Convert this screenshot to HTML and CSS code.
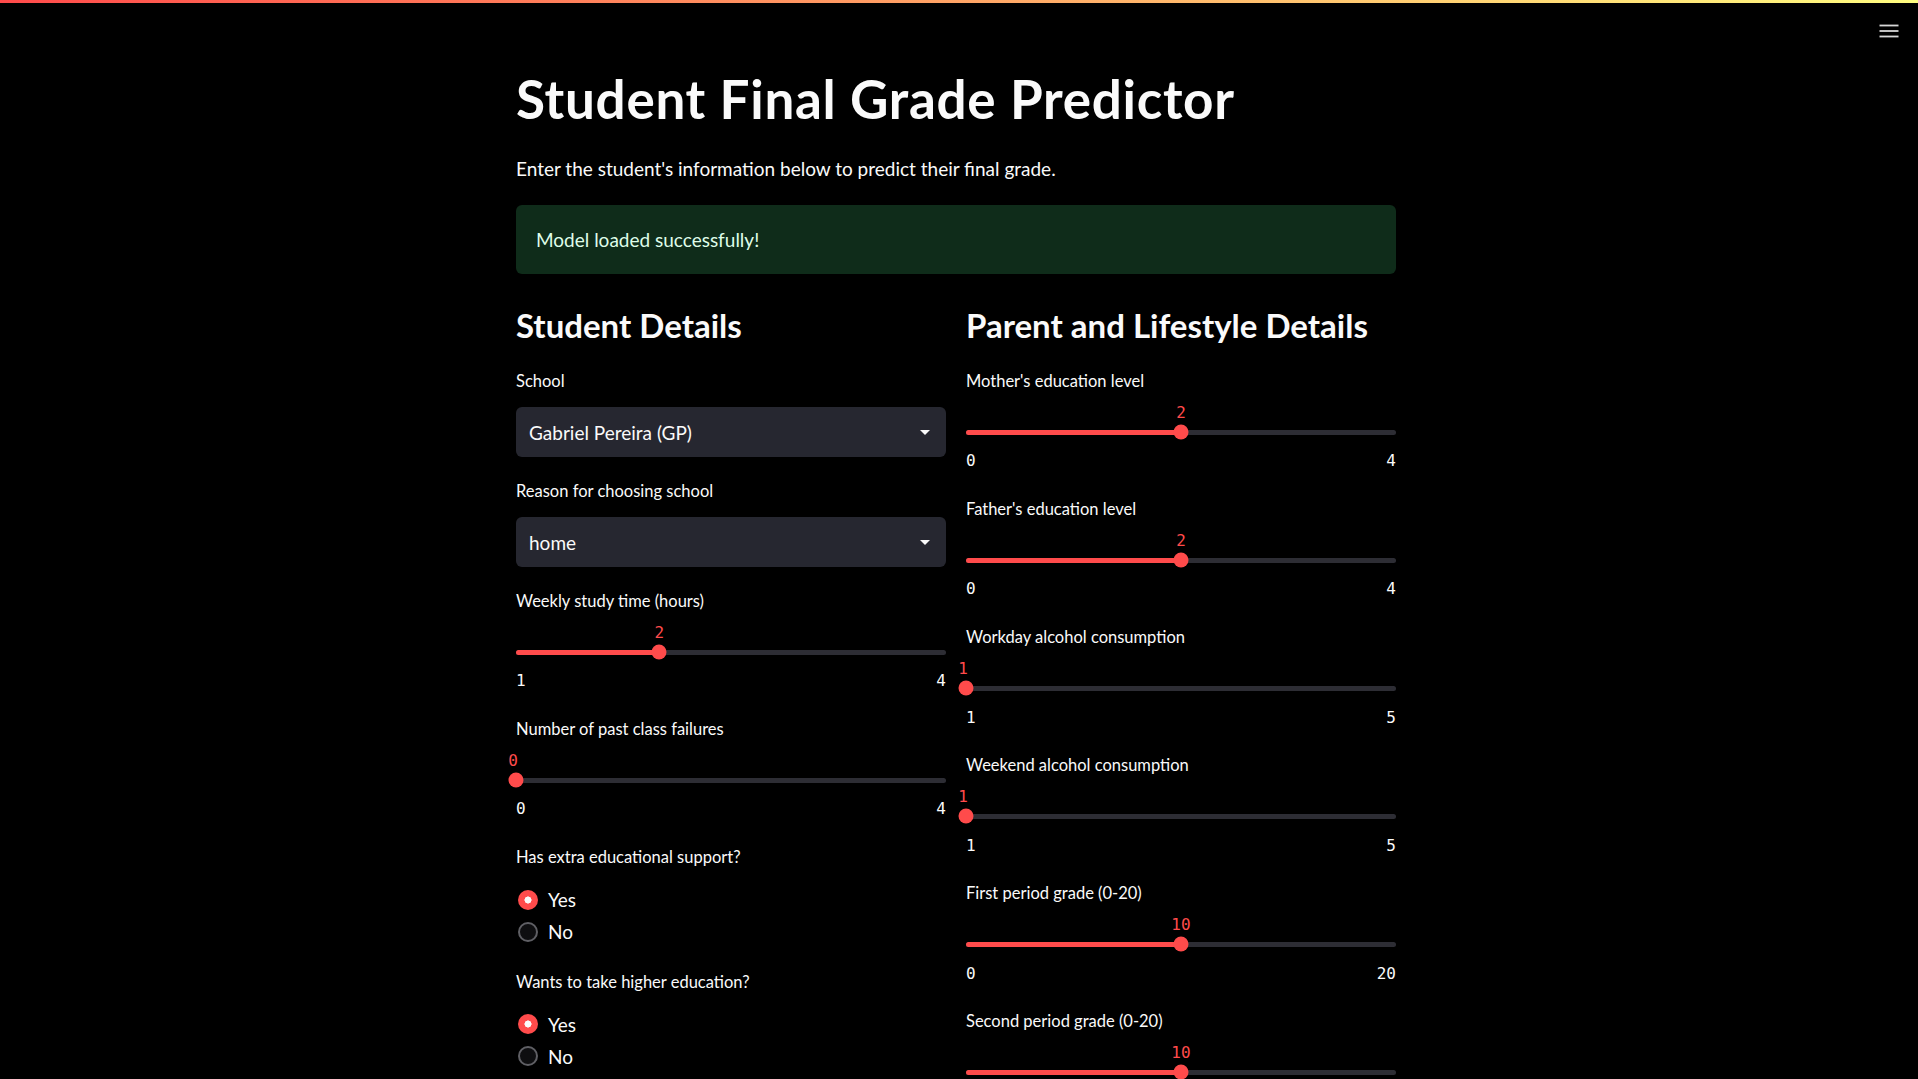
FILE: index.html
```html
<!DOCTYPE html>
<html lang="en">
<head>
<meta charset="utf-8">
<title>Student Final Grade Predictor</title>
<link rel="stylesheet" href="styles.css">
</head>
<body>
<header class="app-header">
  <div class="decoration"></div>
  <button class="menu-btn" aria-label="Main menu">
    <svg width="20" height="14" viewBox="0 0 20 14"><rect x="0.5" y="0.6" width="19" height="1.8" fill="#d6d6d6"/><rect x="0.5" y="6.1" width="19" height="1.8" fill="#d6d6d6"/><rect x="0.5" y="11.6" width="19" height="1.8" fill="#d6d6d6"/></svg>
  </button>
</header>
<main class="block">
  <h1 class="title">Student Final Grade Predictor</h1>
  <p class="intro">Enter the student's information below to predict their final grade.</p>
  <div class="alert">Model loaded successfully!</div>

  <div class="columns">
    <section class="col">
      <h3 class="subheader">Student Details</h3>
      <div class="widgets">
        <div class="widget">
          <label class="wlabel">School</label>
          <div class="select"><span>Gabriel Pereira (GP)</span><svg class="caret" width="10" height="5" viewBox="0 0 10 5"><polygon points="0,0 10,0 5,5" fill="#fafafa"/></svg></div>
        </div>
        <div class="widget">
          <label class="wlabel">Reason for choosing school</label>
          <div class="select"><span>home</span><svg class="caret" width="10" height="5" viewBox="0 0 10 5"><polygon points="0,0 10,0 5,5" fill="#fafafa"/></svg></div>
        </div>
        <div class="widget">
          <label class="wlabel">Weekly study time (hours)</label>
          <div class="slider">
            <div class="track-wrap">
              <div class="track"><div class="fill" style="width:33.333%"></div></div>
              <div class="thumb" style="left:33.333%"><span class="thumb-value">2</span></div>
            </div>
            <div class="ticks"><span>1</span><span>4</span></div>
          </div>
        </div>
        <div class="widget">
          <label class="wlabel">Number of past class failures</label>
          <div class="slider">
            <div class="track-wrap">
              <div class="track"><div class="fill" style="width:0%"></div></div>
              <div class="thumb" style="left:0%"><span class="thumb-value at-min">0</span></div>
            </div>
            <div class="ticks"><span>0</span><span>4</span></div>
          </div>
        </div>
        <div class="widget">
          <label class="wlabel">Has extra educational support?</label>
          <div class="radio-group">
            <div class="radio"><span class="dot checked"></span><span>Yes</span></div>
            <div class="radio"><span class="dot"></span><span>No</span></div>
          </div>
        </div>
        <div class="widget">
          <label class="wlabel">Wants to take higher education?</label>
          <div class="radio-group">
            <div class="radio"><span class="dot checked"></span><span>Yes</span></div>
            <div class="radio"><span class="dot"></span><span>No</span></div>
          </div>
        </div>
      </div>
    </section>

    <section class="col">
      <h3 class="subheader">Parent and Lifestyle Details</h3>
      <div class="widgets">
        <div class="widget">
          <label class="wlabel">Mother's education level</label>
          <div class="slider">
            <div class="track-wrap">
              <div class="track"><div class="fill" style="width:50%"></div></div>
              <div class="thumb" style="left:50%"><span class="thumb-value">2</span></div>
            </div>
            <div class="ticks"><span>0</span><span>4</span></div>
          </div>
        </div>
        <div class="widget">
          <label class="wlabel">Father's education level</label>
          <div class="slider">
            <div class="track-wrap">
              <div class="track"><div class="fill" style="width:50%"></div></div>
              <div class="thumb" style="left:50%"><span class="thumb-value">2</span></div>
            </div>
            <div class="ticks"><span>0</span><span>4</span></div>
          </div>
        </div>
        <div class="widget">
          <label class="wlabel">Workday alcohol consumption</label>
          <div class="slider">
            <div class="track-wrap">
              <div class="track"><div class="fill" style="width:0%"></div></div>
              <div class="thumb" style="left:0%"><span class="thumb-value at-min">1</span></div>
            </div>
            <div class="ticks"><span>1</span><span>5</span></div>
          </div>
        </div>
        <div class="widget">
          <label class="wlabel">Weekend alcohol consumption</label>
          <div class="slider">
            <div class="track-wrap">
              <div class="track"><div class="fill" style="width:0%"></div></div>
              <div class="thumb" style="left:0%"><span class="thumb-value at-min">1</span></div>
            </div>
            <div class="ticks"><span>1</span><span>5</span></div>
          </div>
        </div>
        <div class="widget">
          <label class="wlabel">First period grade (0-20)</label>
          <div class="slider">
            <div class="track-wrap">
              <div class="track"><div class="fill" style="width:50%"></div></div>
              <div class="thumb" style="left:50%"><span class="thumb-value">10</span></div>
            </div>
            <div class="ticks"><span>0</span><span>20</span></div>
          </div>
        </div>
        <div class="widget">
          <label class="wlabel">Second period grade (0-20)</label>
          <div class="slider">
            <div class="track-wrap">
              <div class="track"><div class="fill" style="width:50%"></div></div>
              <div class="thumb" style="left:50%"><span class="thumb-value">10</span></div>
            </div>
            <div class="ticks"><span>0</span><span>20</span></div>
          </div>
        </div>
      </div>
    </section>
  </div>
</main>
</body>
</html>
```

FILE: styles.css
```css
html, body {
  margin: 0;
  background: #000;
  color: #fafafa;
  font-family: Lato, "Noto Sans", sans-serif;
}
body {
  padding-right: 6px;
  overflow: hidden;
  height: 1079px;
}
.app-header {
  position: fixed;
  top: 0;
  left: 0;
  right: 0;
  height: 58px;
}
.decoration {
  height: 3px;
  background: linear-gradient(90deg, #ff4b4b, #fffd80);
}
.menu-btn {
  position: absolute;
  top: 24px;
  right: 19px;
  width: 20px;
  height: 14px;
  padding: 0;
  border: 0;
  background: none;
  display: block;
}
.menu-btn svg { display: block; }

.block {
  width: 880px;
  margin: 0 auto;
  padding-top: 69px;
}
.title {
  margin: 0;
  font-size: 53px;
  line-height: 60px;
  letter-spacing: 0.7px;
  font-weight: 700;
}
.intro {
  margin: 24px 0 0;
  font-size: 19px;
  line-height: 32px;
}
.alert {
  margin-top: 20px;
  padding: 20px;
  font-size: 19px;
  line-height: 29px;
  background: #0f2c1a;
  color: #dffde9;
  border-radius: 6px;
}
.columns {
  display: grid;
  grid-template-columns: 1fr 1fr;
  column-gap: 20px;
  margin-top: 31px;
}
.subheader {
  margin: 0;
  font-size: 33px;
  line-height: 40px;
  font-weight: 700;
}
.widgets {
  display: flex;
  flex-direction: column;
  gap: 20px;
  margin-top: 22px;
}
.widget {
  display: flex;
  flex-direction: column;
}
.wlabel {
  font-size: 16.5px;
  line-height: 28px;
  height: 28px;
}
.select {
  margin-top: 12px;
  height: 50px;
  background: #262730;
  border-radius: 6px;
  display: flex;
  align-items: center;
  justify-content: space-between;
  padding: 0 16px 0 13px;
  font-size: 19px;
}
.caret { display: block; }

.slider {
  height: 80.1px;
}
.track-wrap {
  position: relative;
  margin-top: 30px;
  height: 14px;
  display: flex;
  align-items: center;
}
.track {
  flex: 1;
  height: 5px;
  border-radius: 3px;
  background: #2d2d34;
  overflow: hidden;
}
.fill {
  height: 100%;
  background: #ff4b4b;
}
.thumb {
  position: absolute;
  top: 50%;
  width: 15px;
  height: 15px;
  border-radius: 50%;
  background: #ff4b4b;
  transform: translate(-50%, -50%);
}
.thumb-value {
  position: absolute;
  bottom: calc(100% + 2px);
  left: 50%;
  transform: translateX(-50%);
  font-family: "DejaVu Sans Mono", "Liberation Mono", monospace;
  font-size: 16px;
  line-height: 20px;
  color: #ff4b4b;
  white-space: nowrap;
}
.thumb-value.at-min {
  margin-left: -3px;
}
.ticks {
  margin-top: 12.4px;
  display: flex;
  justify-content: space-between;
  font-family: "DejaVu Sans Mono", "Liberation Mono", monospace;
  font-size: 16px;
  line-height: 20px;
  color: #fafafa;
}

.radio-group {
  margin-top: 12.5px;
  display: flex;
  flex-direction: column;
}
.radio {
  height: 32px;
  display: flex;
  align-items: center;
  gap: 10px;
  padding-left: 2px;
  font-size: 19px;
}
.dot {
  width: 20px;
  height: 20px;
  box-sizing: border-box;
  border-radius: 50%;
  border: 2.5px solid #5f5f64;
  background: #0e0e10;
}
.dot.checked {
  border: 0;
  background: radial-gradient(circle, #fafafa 0 3.3px, #ff4b4b 3.8px);
}
```
